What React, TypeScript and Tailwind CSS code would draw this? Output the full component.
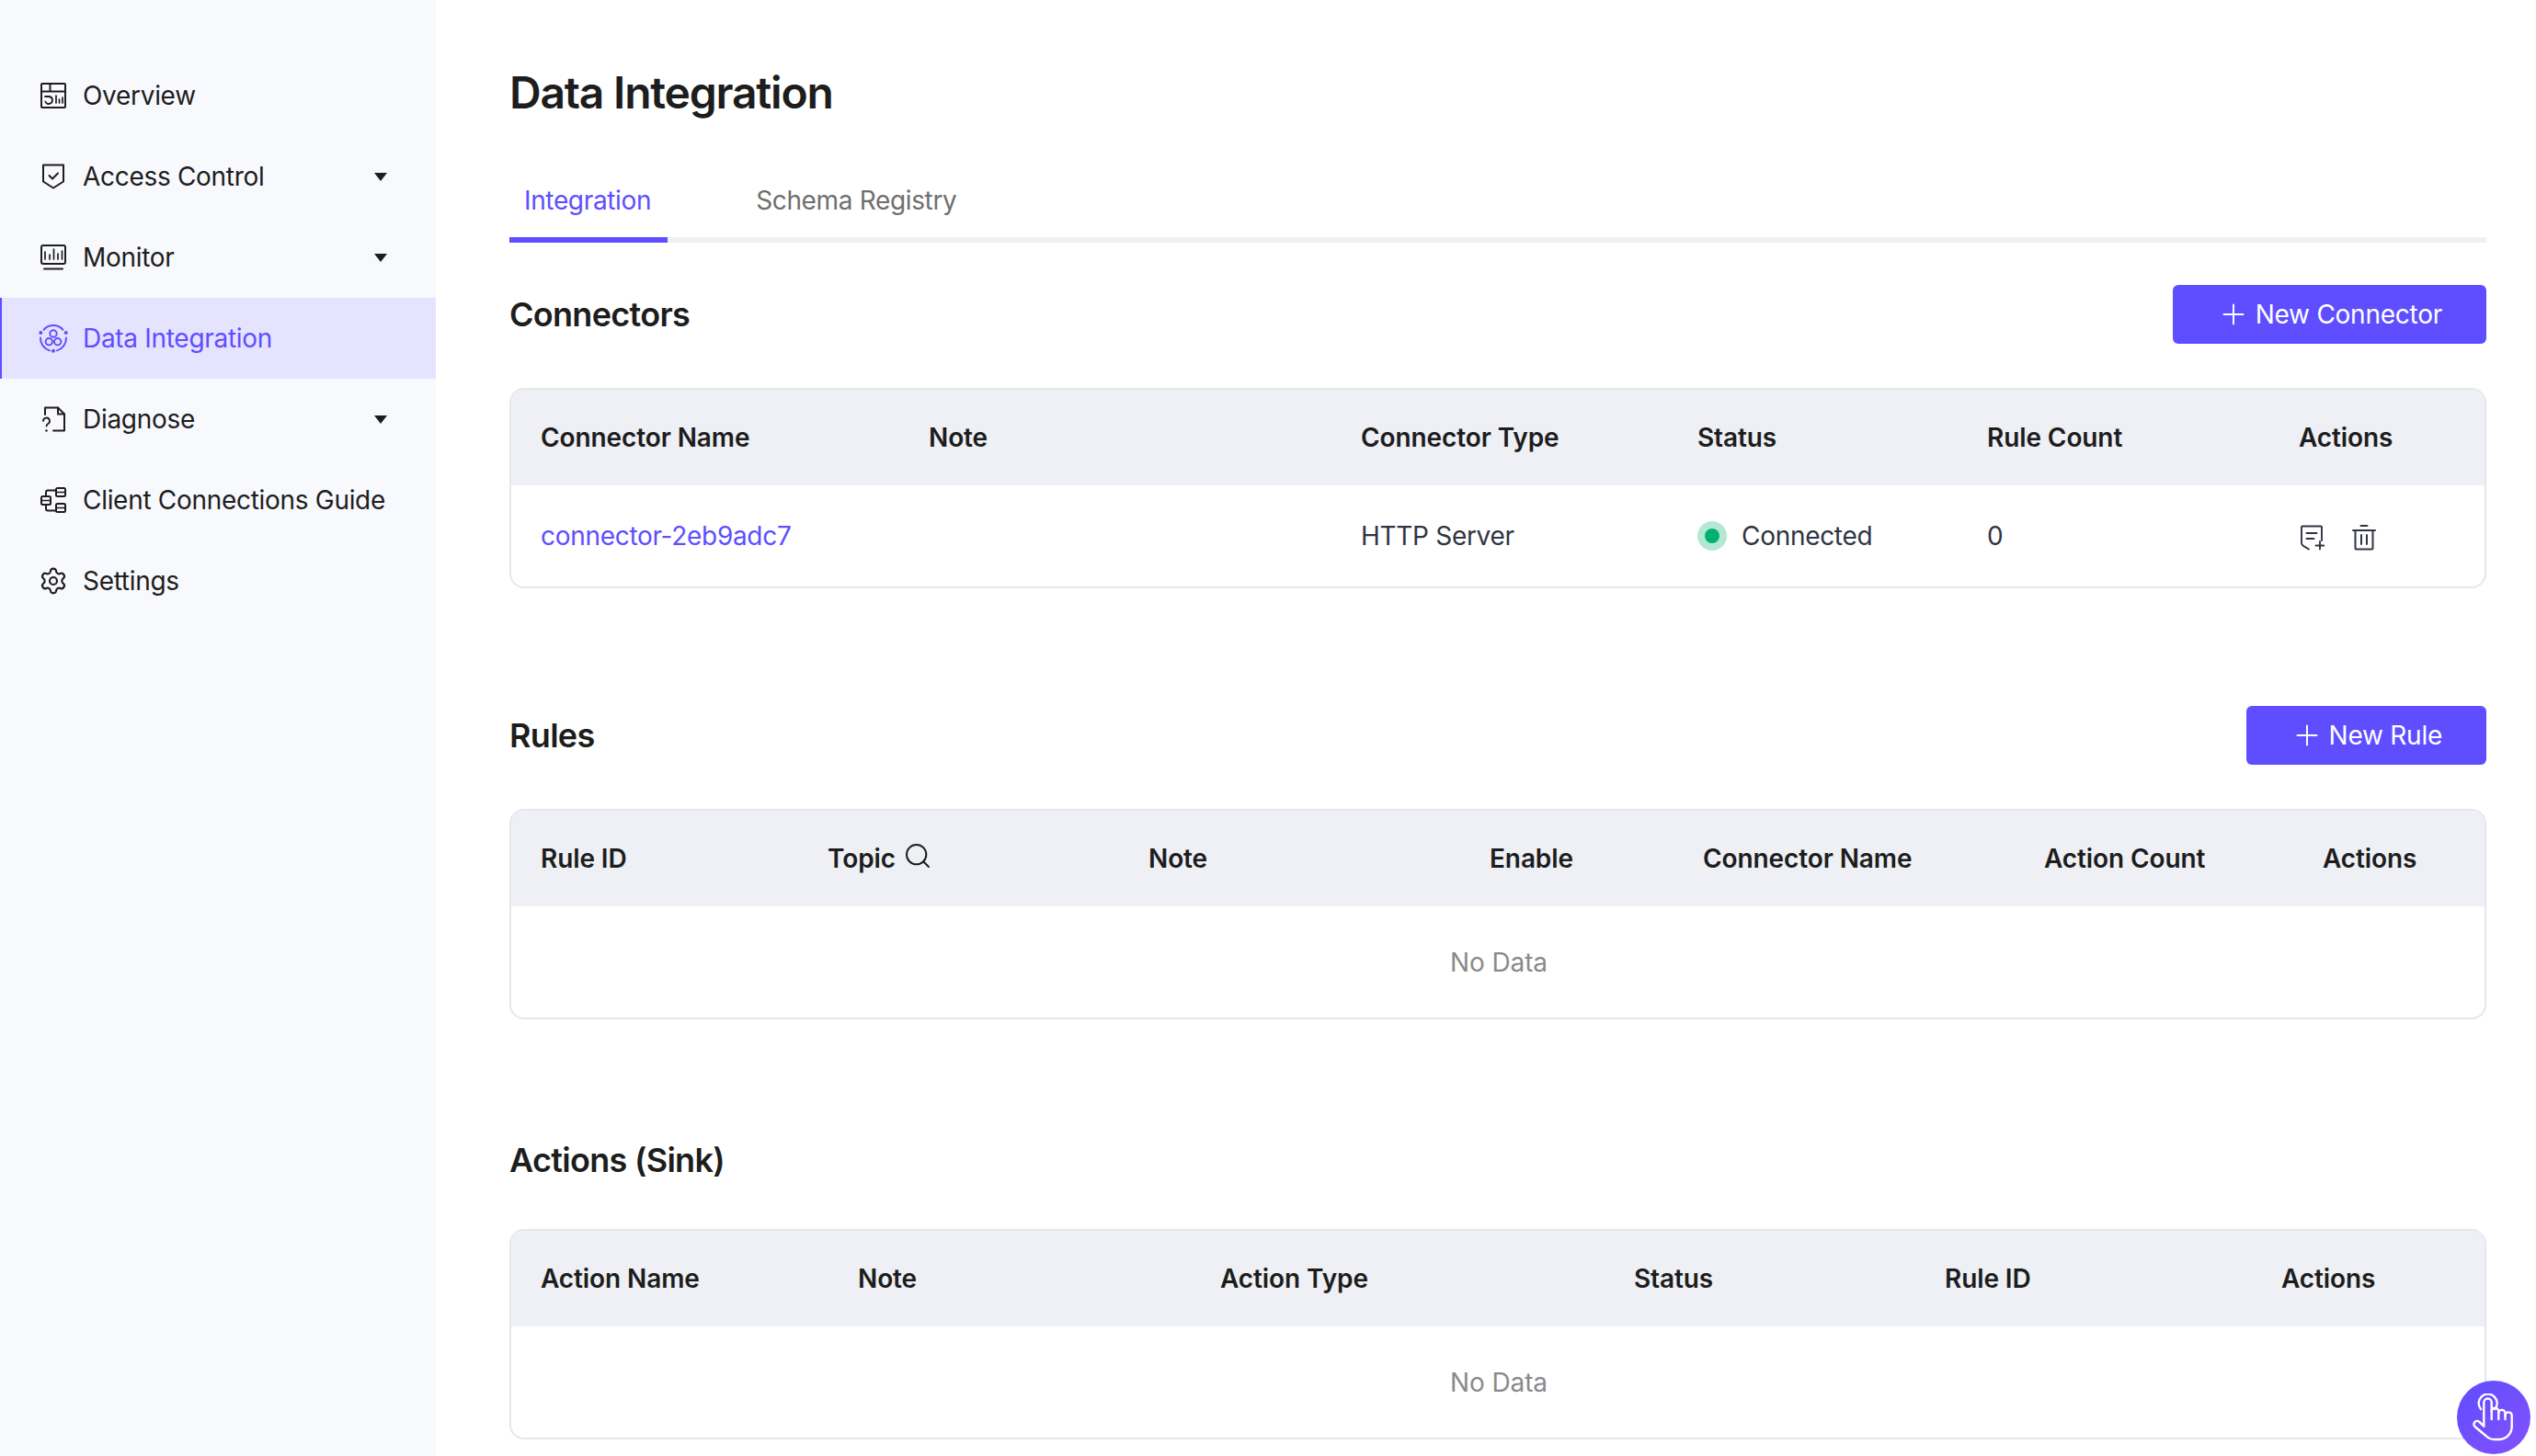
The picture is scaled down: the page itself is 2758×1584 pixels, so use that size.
import { Plus, Search, Settings } from "lucide-react";
import type { ReactNode } from "react";

const Svg = ({ size = 28, children, className }: { size?: number; children: ReactNode; className?: string }) => (
  <svg
    width={size}
    height={size}
    viewBox={`0 0 ${size} ${size}`}
    fill="none"
    stroke="currentColor"
    strokeWidth={2}
    strokeLinecap="round"
    strokeLinejoin="round"
    className={`shrink-0 ${className ?? ""}`}
  >
    {children}
  </svg>
);

const OverviewIcon = () => (
  <Svg>
    <rect x="1" y="1" width="26" height="26" rx="1" />
    <path d="M1 9.500h26M10.500 1v8.500" />
    <path d="M5 15h4.500a4 4 0 1 1-4.200 5.500" strokeWidth={1.800} />
    <path d="M17 14v8M20.500 18v4M24 16v6" strokeWidth={1.700} />
  </Svg>
);

const ShieldIcon = () => (
  <Svg>
    <path d="M3 1.500h22V19.500L14 26.500 3 19.500z" />
    <path d="M9.500 13l3.500 3.500 6-6" />
  </Svg>
);

const MonitorIcon = () => (
  <Svg>
    <rect x="1" y="1" width="26" height="20" rx="2" />
    <path d="M5 8v8M10 11v5M14.500 5v11M19 10v6M23.500 7v9" strokeWidth={1.700} />
    <path d="M4 26.500h20" />
  </Svg>
);

const IntegrationIcon = () => (
  <Svg size={32}>
    <path d="M5.500 6.800A14 14 0 0 1 26.500 6.800M30 15.500A14 14 0 0 1 20 29.400M2 15.500A14 14 0 0 0 12 29.400" />
    <circle cx="16" cy="11" r="3.700" />
    <circle cx="11.300" cy="19.700" r="3.700" />
    <circle cx="20.700" cy="19.700" r="3.700" />
    <circle cx="2.300" cy="10" r="2" fill="currentColor" stroke="none" />
    <circle cx="29.700" cy="10" r="2" fill="currentColor" stroke="none" />
    <circle cx="16" cy="29.700" r="2" fill="currentColor" stroke="none" />
  </Svg>
);

const DiagnoseIcon = () => (
  <Svg>
    <path d="M5 9V1.500h14L26 8.500V26.500H14" />
    <path d="M19 1.500V8.500h7" />
    <path d="M3 16a3.500 3.500 0 1 1 5 3.200c-1 .6-1.500 1-1.500 2.300" strokeWidth={1.800} />
    <path d="M6.500 26.500v.01" strokeWidth={2.400} />
  </Svg>
);

const GuideIcon = () => (
  <Svg>
    <rect x="1" y="10" width="10" height="9" rx="1.500" />
    <path d="M6 10V5.500A2 2 0 0 1 8 3.500h9M6 19v4.500a2 2 0 0 0 2 2h9" />
    <rect x="17" y="1" width="10" height="9" rx="1.500" />
    <rect x="17" y="18" width="10" height="9" rx="1.500" />
    <path d="M1 14.500h10M17 5.500h10M17 22.500h10" strokeWidth={1.600} />
  </Svg>
);

const NoteAddIcon = () => (
  <Svg>
    <path d="M25 17V2.500a1 1 0 0 0-1-1H4a1 1 0 0 0-1 1V20c0 2.500 4 4 8 6.500" strokeWidth={1.900} />
    <path d="M8.500 9h11M8.500 15h8" strokeWidth={1.900} />
    <path d="M23 18v8.500M18.500 22.500h9" strokeWidth={1.900} />
  </Svg>
);

const TrashIcon = () => (
  <Svg>
    <path d="M2 6h24M10.500 1h7" />
    <path d="M4.500 6v19.500a1 1 0 0 0 1 1h17a1 1 0 0 0 1-1V6" />
    <path d="M11 11v10M17 11v10" />
  </Svg>
);

// hand with a ring round the fingertip, traced from the floating help button
const HandIcon = () => (
  <svg width="46" height="52" viewBox="0 0 46 52" fill="none" stroke="white" strokeWidth={2.400} strokeLinecap="round" strokeLinejoin="round">
    <path d="M9 17a10 10 0 1 1 15.400 0" />
    <path d="M12.300 35.500V9.700a4.200 4.200 0 0 1 8.400 0V28" />
    <path d="M20.700 19.500a3.800 3.800 0 0 1 7.600 0V28" />
    <path d="M28.300 21.500a3.600 3.600 0 0 1 7.200 0V28" />
    <path d="M35.500 24a3.600 3.600 0 0 1 7.200 0V36a14 14 0 0 1-14 14H24c-4 0-7-1.500-9.500-4L2.500 36a3.500 3.500 0 0 1 5-5l4.800 4.500" />
  </svg>
);

const Caret = () => <div className="w-0 h-0 border-x-[7px] border-x-transparent border-t-[9px] border-t-[#1d1d1d] ml-auto" />;

const navItems = [
  { label: "Overview", icon: <OverviewIcon /> },
  { label: "Access Control", icon: <ShieldIcon />, caret: true },
  { label: "Monitor", icon: <MonitorIcon />, caret: true },
  { label: "Data Integration", icon: <IntegrationIcon />, active: true },
  { label: "Diagnose", icon: <DiagnoseIcon />, caret: true },
  { label: "Client Connections Guide", icon: <GuideIcon /> },
  { label: "Settings", icon: <Settings size={32} strokeWidth={1.600} className="shrink-0" /> },
];

function Sidebar() {
  return (
    <aside className="w-[474px] shrink-0 bg-[#f8f9fd] pt-[60px]">
      {navItems.map((item) => (
        <div
          key={item.label}
          className={`h-[88px] flex items-center pr-[53px] border-l-2 ${
            item.active ? "bg-[#e6e3ff] border-[#5e4eff] text-[#5e4eff]" : "border-transparent text-[#1d1d1d]"
          }`}
        >
          <div className="w-[28px] ml-[42px] flex items-center justify-center shrink-0">{item.icon}</div>
          <span className="ml-[18px] text-[28px] tracking-[-0.3px] whitespace-nowrap">{item.label}</span>
          {item.caret && <Caret />}
        </div>
      ))}
    </aside>
  );
}

function Section({ title, button, children, className }: { title: string; button?: string; children: ReactNode; className?: string }) {
  return (
    <section className={className}>
      <div className={`flex items-center justify-between ${button ? "h-[64px]" : "h-[55px]"}`}>
        <h2 className="text-[36px] font-semibold tracking-[-0.7px] text-[#1d1d1d]">{title}</h2>
        {button && (
          <button className="h-[64px] px-[48px] rounded-[6px] bg-[#5e4eff] text-white text-[28px] tracking-[-0.25px] flex items-center gap-[6px]">
            <Plus size={36} strokeWidth={1.300} />
            {button}
          </button>
        )}
      </div>
      {children}
    </section>
  );
}

function DataTable({ columns, widths, row }: { columns: ReactNode[]; widths: number[]; row?: ReactNode[] }) {
  return (
    <div className="mt-[48px] border-2 border-[#e4e7ec] rounded-[16px] overflow-hidden bg-white">
      <table className="w-full table-fixed text-[28px]">
        <colgroup>
          {widths.map((w, i) => (
            <col key={i} style={{ width: w }} />
          ))}
        </colgroup>
        <thead>
          <tr className="h-[104px] bg-[#eef0f5]">
            {columns.map((c, i) => (
              <th key={i} className="px-[32px] text-left font-semibold tracking-[-0.1px] text-[#1d1d1d]">
                {c}
              </th>
            ))}
          </tr>
        </thead>
        <tbody>
          {row ? (
            <tr className="h-[110px]">
              {row.map((c, i) => (
                <td key={i} className="px-[32px] tracking-[-0.3px] text-[#2f3542]">
                  {c}
                </td>
              ))}
            </tr>
          ) : (
            <tr className="h-[121px]">
              <td colSpan={columns.length} className="text-center tracking-[-0.1px] text-[#8a8a8a]">
                No Data
              </td>
            </tr>
          )}
        </tbody>
      </table>
    </div>
  );
}

export default function App() {
  return (
    <div className="relative flex h-[1584px] overflow-hidden bg-white font-['Inter',sans-serif]">
      <Sidebar />
      <main className="flex-1 min-w-0 pl-[80px] pr-[54px] pt-[69px]">
        <h1 className="text-[48px] leading-[64px] font-semibold tracking-[-1.2px] text-[#1d1d1d]">Data Integration</h1>
        <div className="mt-[53px] flex gap-[80px] border-b-[6px] border-[#eef0f5] text-[28px] tracking-[-0.35px]">
          <div className="-mb-[6px] h-[78px] pl-[16px] pr-[18px] pb-[8px] flex items-center border-b-[6px] border-[#5e4eff] text-[#5e4eff]">Integration</div>
          <div className="-mb-[6px] h-[78px] px-[16px] pb-[8px] flex items-center border-b-[6px] border-transparent text-[#6f6f6f]">Schema Registry</div>
        </div>
        <Section title="Connectors" button="New Connector" className="mt-[46px]">
          <DataTable
            columns={["Connector Name", "Note", "Connector Type", "Status", "Rule Count", "Actions"]}
            widths={[422, 470, 366, 315, 339, 236]}
            row={[
              <a className="text-[#5e4eff]">connector-2eb9adc7</a>,
              "",
              "HTTP Server",
              <div className="flex items-center gap-[16px]">
                <div className="w-[32px] h-[32px] rounded-full bg-[#b4e8d3] flex items-center justify-center">
                  <div className="w-[16px] h-[16px] rounded-full bg-[#00b173]" />
                </div>
                Connected
              </div>,
              "0",
              <div className="flex items-center gap-[29px] translate-y-[2px] text-[#2f3542]">
                <NoteAddIcon />
                <TrashIcon />
              </div>,
            ]}
          />
        </Section>
        <Section title="Rules" button="New Rule" className="mt-[128px]">
          <DataTable
            columns={[
              "Rule ID",
              <div className="flex items-center gap-[8px]">
                Topic <Search size={32} strokeWidth={1.500} className="-translate-y-[3px]" />
              </div>,
              "Note",
              "Enable",
              "Connector Name",
              "Action Count",
              "Actions",
            ]}
            widths={[312, 349, 371, 232, 371, 303, 210]}
          />
        </Section>
        <Section title="Actions (Sink)" className="mt-[125px]">
          <DataTable
            columns={["Action Name", "Note", "Action Type", "Status", "Rule ID", "Actions"]}
            widths={[345, 394, 450, 338, 366, 255]}
          />
        </Section>
      </main>
      <div className="absolute left-[2672px] top-[1502px] w-[80px] h-[80px] rounded-full bg-gradient-to-br from-[#5e4eff] to-[#8350ff] flex items-center justify-center">
        <HandIcon />
      </div>
    </div>
  );
}
